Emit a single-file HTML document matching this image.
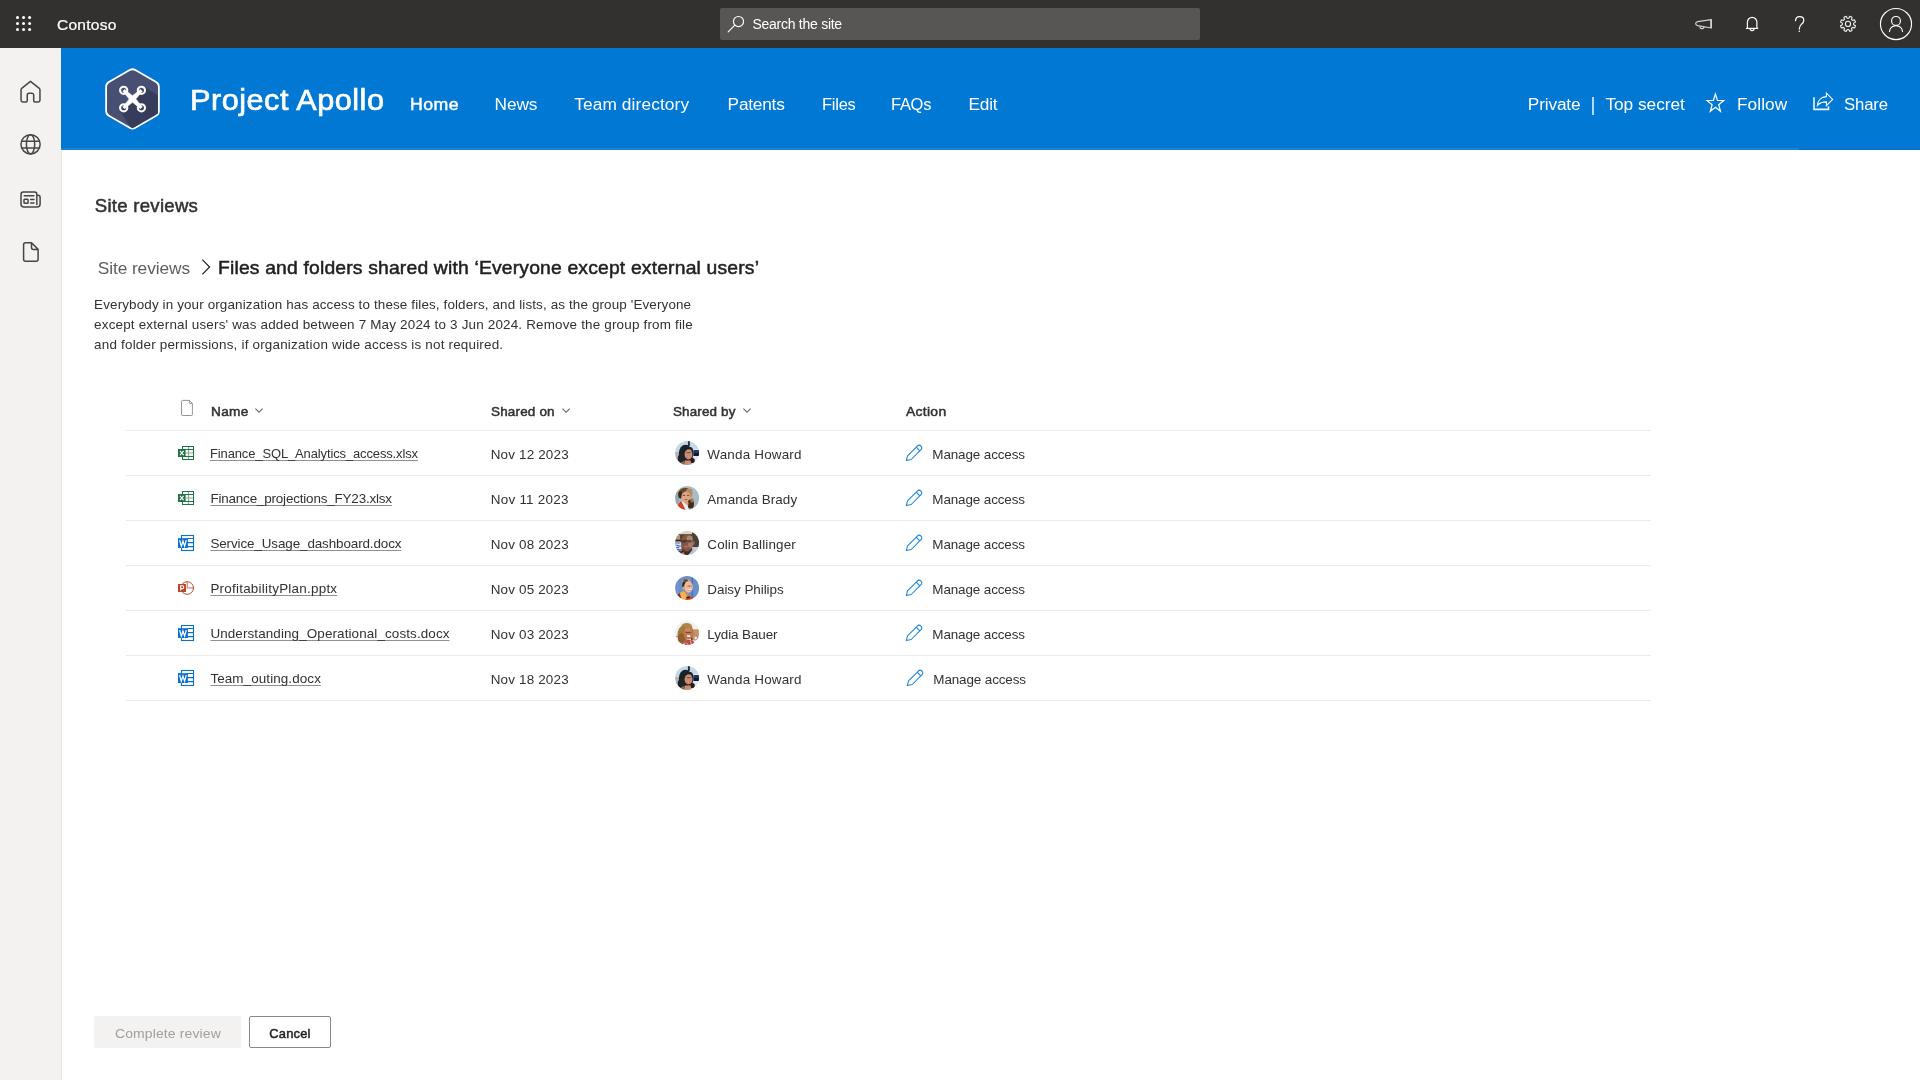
<!DOCTYPE html>
<html lang="en">
<head>
<meta charset="utf-8">
<title>Project Apollo - Site reviews</title>
<style>
html,body{margin:0;padding:0;}
body{width:1920px;height:1080px;overflow:hidden;background:#ffffff;position:relative;font-family:"Liberation Sans",sans-serif;}
.abs{position:absolute;}
.t{position:absolute;line-height:0;white-space:nowrap;font-family:"Liberation Sans",sans-serif;font-weight:normal;}
svg{position:absolute;overflow:visible;}
#topbar{left:0;top:0;width:1920px;height:48px;background:#323130;}
#searchbox{left:720px;top:8px;width:480px;height:32px;background:#585654;border-radius:2px;}
#leftnav{left:0;top:48px;width:61px;height:1032px;background:#f3f2f1;}
#navline{left:61px;top:150px;width:1px;height:930px;background:#e8e7e7;}
#sitehdr{left:61px;top:48px;width:1859px;height:102px;background:#0078d4;}
#hdrband{left:61px;top:148px;width:1738px;height:2px;background:#1682d8;}
#hdrband2{left:1799px;top:149px;width:121px;height:1px;background:#0070cf;}
.hl{position:absolute;left:126px;width:1525px;height:1px;background:#edebe9;}
#btn1{left:94px;top:1016px;width:147px;height:32px;background:#f3f2f1;border-radius:2px;}
#btn2{left:249px;top:1016px;width:82px;height:32px;background:#ffffff;border:1px solid #8a8886;border-radius:2px;box-sizing:border-box;}
</style>
</head>
<body>
<div id="topbar" class="abs"></div>
<div id="searchbox" class="abs"></div>
<div id="leftnav" class="abs"></div>
<div id="navline" class="abs"></div>
<div id="sitehdr" class="abs"></div>
<div id="hdrband" class="abs"></div>
<div id="hdrband2" class="abs"></div>

<!-- table lines -->
<div class="hl" style="top:430px"></div>
<div class="hl" style="top:475px"></div>
<div class="hl" style="top:520px"></div>
<div class="hl" style="top:565px"></div>
<div class="hl" style="top:610px"></div>
<div class="hl" style="top:655px"></div>
<div class="hl" style="top:700px"></div>

<div class="abs" style="left:1592px;top:97px;width:2px;height:17.6px;background:rgba(255,255,255,0.72)"></div>
<div id="btn1" class="abs"></div>
<div id="btn2" class="abs"></div>

<svg id="ico" width="1920" height="1080" viewBox="0 0 1920 1080" style="left:0;top:0">
<!-- waffle -->
<g fill="#ffffff">
<circle cx="17.5" cy="17.6" r="1.5"/><circle cx="23.55" cy="17.6" r="1.5"/><circle cx="29.6" cy="17.6" r="1.5"/>
<circle cx="17.5" cy="23.6" r="1.5"/><circle cx="23.55" cy="23.6" r="1.5"/><circle cx="29.6" cy="23.6" r="1.5"/>
<circle cx="17.5" cy="29.6" r="1.5"/><circle cx="23.55" cy="29.6" r="1.5"/><circle cx="29.6" cy="29.6" r="1.5"/>
</g>
<!-- search icon -->
<g fill="none" stroke="#ffffff" stroke-width="1.15" stroke-linecap="round">
<circle cx="738.5" cy="21.5" r="5.05"/><path d="M734.8 25.2 L728.2 31.8"/>
</g>
<!-- megaphone -->
<g fill="none" stroke="#d2d1d0" stroke-width="1.25" stroke-linejoin="round">
<path d="M1711.3 19.6 L1697.6 21.7 Q1695.7 22.1 1695.7 23.6 Q1695.7 25.2 1697.6 25.6 L1711.3 28 Z"/>
<path d="M1711.1 19.6 V28" stroke-width="1.7"/>
<path d="M1700.1 26.3 A2 2.1 0 0 0 1704.1 26.9"/>
</g>
<!-- bell -->
<g fill="none" stroke="#ffffff" stroke-width="1.2">
<path d="M1747.4 28.4 V22.2 A4.75 4.9 0 0 1 1756.9 22.2 V28.4"/>
<path d="M1745.9 28.4 H1758.2"/>
<path d="M1750.1 28.6 A2 2.1 0 0 0 1754.1 28.6"/>
</g>
<!-- help -->
<g fill="none" stroke="#ffffff" stroke-width="1.25" stroke-linecap="round">
<path d="M1795.5 20.6 C1795.7 18 1797.4 16.6 1799.6 16.6 C1802.2 16.6 1803.8 18.2 1803.8 20.4 C1803.8 22.4 1802.6 23.4 1801.2 24.6 C1799.9 25.8 1799.3 26.6 1799.3 29"/>
</g>
<circle cx="1799.3" cy="31.3" r="0.8" fill="#ffffff"/>
<!-- gear -->
<g fill="none" stroke="#f0f0f0" stroke-width="1.1" stroke-linejoin="round">
<path id="gearpath" d="M1848.76 18.25 L1849.81 16.36 L1852.05 17.29 L1851.46 19.37 L1852.53 20.44 L1854.61 19.85 L1855.54 22.09 L1853.65 23.14 L1853.65 24.66 L1855.54 25.71 L1854.61 27.95 L1852.53 27.36 L1851.46 28.43 L1852.05 30.51 L1849.81 31.44 L1848.76 29.55 L1847.24 29.55 L1846.19 31.44 L1843.95 30.51 L1844.54 28.43 L1843.47 27.36 L1841.39 27.95 L1840.46 25.71 L1842.35 24.66 L1842.35 23.14 L1840.46 22.09 L1841.39 19.85 L1843.47 20.44 L1844.54 19.37 L1843.95 17.29 L1846.19 16.36 L1847.24 18.25 Z"/>
<circle cx="1848" cy="23.9" r="2.6"/>
</g>
<!-- user -->
<g fill="none" stroke="#ffffff" stroke-width="1.15" stroke-linecap="round">
<circle cx="1896" cy="24" r="15.55"/>
<circle cx="1896" cy="20.9" r="4.45"/>
<path d="M1889.5 31.6 A6.5 6 0 0 1 1902.5 31.6"/>
</g>
<!-- left nav icons -->
<g fill="none" stroke="#484644" stroke-width="1.5" stroke-linejoin="round" stroke-linecap="round">
<path d="M30.45 81.3 L21.7 88.3 Q21.05 88.85 21.05 89.7 V100.3 Q21.05 102 22.8 102 H26 Q27.25 102 27.25 100.8 V94.9 Q27.25 93.15 29 93.15 H32 Q33.7 93.15 33.7 94.9 V100.8 Q33.7 102 35 102 H38.2 Q39.95 102 39.95 100.3 V89.7 Q39.95 88.85 39.3 88.3 Z"/>
<circle cx="30.55" cy="144.35" r="9.6"/>
<ellipse cx="30.55" cy="144.35" rx="4.15" ry="9.6"/>
<path d="M21.6 141.3 H39.5 M21.6 147.9 H39.5"/>
<!-- news -->
<path d="M36.85 204.6 V194.2 Q36.85 191.9 34.5 191.9 H23.3 Q21 191.9 21 194.2 V204 Q21 207 24 207 H37 Q40.1 207 40.1 204 V197.4 Q40.1 195.3 38 195.3 H36.9"/>
<path d="M24.2 195.8 H33.9 M30.6 199.4 H34 M30.6 202.9 H34"/>
<rect x="24" y="199.2" width="4.1" height="4" rx="0.8"/>
<!-- file -->
<path d="M31.5 242.8 H25.6 Q23.6 242.8 23.6 244.8 V259.2 Q23.6 261.2 25.6 261.2 H36.1 Q38.1 261.2 38.1 259.2 V249.4 L31.5 242.8 V247.4 Q31.5 249.4 33.5 249.4 H38.1"/>
</g>
<!-- star -->
<path d="M1715.40 94.04 L1717.43 100.50 L1723.67 100.61 L1718.68 104.72 L1720.51 111.24 L1715.40 107.32 L1710.29 111.24 L1712.12 104.72 L1707.13 100.61 L1713.37 100.50 Z" fill="none" stroke="#ffffff" stroke-width="1.25" stroke-linejoin="miter"/>
<!-- share -->
<g fill="none" stroke="#ffffff">
<path d="M1814 97.2 V109.4 H1828.5 V106.3" stroke-width="1.6" stroke-opacity="0.92"/>
<path d="M1826.4 93.2 L1832.6 99.4 L1826.4 105.6 V101.9 C1822.4 101.9 1819.5 103 1817.4 105.5 C1817.7 100.6 1821 96.9 1826.4 96.6 Z" stroke-width="1.15" stroke-linejoin="miter"/>
</g>
<!-- breadcrumb chevron -->
<path d="M202.3 259.6 L209.6 267 L202.3 274.4" fill="none" stroke="#201f1e" stroke-width="1.2"/>
<!-- header doc icon -->
<path d="M189.4 400.4 H182.5 Q181.5 400.4 181.5 401.4 V414.5 Q181.5 415.5 182.5 415.5 H191.4 Q192.4 415.5 192.4 414.5 V403.5 L189.4 400.4 V402.7 Q189.4 403.5 190.2 403.5 H192.4" fill="none" stroke="#8a8886" stroke-width="0.9" stroke-linejoin="round"/>
<!-- header chevrons -->
<g fill="none" stroke="#605e5c" stroke-width="1.05">
<path d="M255.4 408.7 L259 412.3 L262.6 408.7"/>
<path d="M562.5 408.7 L566.1 412.3 L569.7 408.7"/>
<path d="M743.4 408.7 L747 412.3 L750.6 408.7"/>
</g>

<!-- file icons -->
<g transform="translate(178,445)">
<rect x="4.5" y="1.5" width="11" height="13" fill="#ffffff" stroke="#217346" stroke-width="1"/>
<path d="M4.5 4.5 H15.5 M4.5 11.5 H15.5" stroke="#217346" stroke-width="1" fill="none"/>
<path d="M8 8 H15 M10.5 2 V14" stroke="#217346" stroke-opacity="0.55" stroke-width="1.2" fill="none"/>
<rect x="0" y="4" width="7.6" height="8" fill="#217346"/>
<path d="M2 5.8 L5.6 10.2 M5.6 5.8 L2 10.2" stroke="#ffffff" stroke-width="1.15" fill="none"/>
</g><g transform="translate(178,490)">
<rect x="4.5" y="1.5" width="11" height="13" fill="#ffffff" stroke="#217346" stroke-width="1"/>
<path d="M4.5 4.5 H15.5 M4.5 11.5 H15.5" stroke="#217346" stroke-width="1" fill="none"/>
<path d="M8 8 H15 M10.5 2 V14" stroke="#217346" stroke-opacity="0.55" stroke-width="1.2" fill="none"/>
<rect x="0" y="4" width="7.6" height="8" fill="#217346"/>
<path d="M2 5.8 L5.6 10.2 M5.6 5.8 L2 10.2" stroke="#ffffff" stroke-width="1.15" fill="none"/>
</g><g transform="translate(178,535)">
<rect x="3.5" y="0.5" width="12" height="15" fill="#ffffff" stroke="#0b6fce" stroke-width="1.1"/>
<path d="M9 3.5 H15.5 M9 7.6 H15.5 M9 11.6 H15.5" stroke="#0b6fce" stroke-width="1.1" fill="none"/>
<rect x="0" y="3.2" width="9.9" height="9.8" fill="#0b6fce"/>
<path d="M1.6 5.2 L3.3 11.2 L4.95 6 L6.6 11.2 L8.3 5.2" stroke="#ffffff" stroke-width="1.25" fill="none" stroke-linejoin="miter"/>
</g><g transform="translate(178,580)">
<circle cx="9.2" cy="8" r="6.3" fill="#ffffff" stroke="#b7472a" stroke-width="1"/>
<path d="M9.3 2 V7.8 H15.3" stroke="#b7472a" stroke-opacity="0.6" stroke-width="1.3" fill="none"/>
<rect x="0" y="4" width="8" height="8" fill="#b7472a"/>
<path d="M2.7 10.6 V5.7 H4.3 A1.45 1.45 0 0 1 4.3 8.6 H2.9" stroke="#ffffff" stroke-width="1.15" fill="none"/>
</g><g transform="translate(178,625)">
<rect x="3.5" y="0.5" width="12" height="15" fill="#ffffff" stroke="#0b6fce" stroke-width="1.1"/>
<path d="M9 3.5 H15.5 M9 7.6 H15.5 M9 11.6 H15.5" stroke="#0b6fce" stroke-width="1.1" fill="none"/>
<rect x="0" y="3.2" width="9.9" height="9.8" fill="#0b6fce"/>
<path d="M1.6 5.2 L3.3 11.2 L4.95 6 L6.6 11.2 L8.3 5.2" stroke="#ffffff" stroke-width="1.25" fill="none" stroke-linejoin="miter"/>
</g><g transform="translate(178,670)">
<rect x="3.5" y="0.5" width="12" height="15" fill="#ffffff" stroke="#0b6fce" stroke-width="1.1"/>
<path d="M9 3.5 H15.5 M9 7.6 H15.5 M9 11.6 H15.5" stroke="#0b6fce" stroke-width="1.1" fill="none"/>
<rect x="0" y="3.2" width="9.9" height="9.8" fill="#0b6fce"/>
<path d="M1.6 5.2 L3.3 11.2 L4.95 6 L6.6 11.2 L8.3 5.2" stroke="#ffffff" stroke-width="1.25" fill="none" stroke-linejoin="miter"/>
</g><g transform="translate(0,0)" fill="none" stroke="#1a84d8" stroke-width="1.05" stroke-linejoin="round">
<path d="M906.3 460.6 L907.5 455.9 L917.36 446.06 A2.6 2.6 0 0 1 921.04 449.74 L911.2 459.5 Z"/>
<path d="M916.2 447.2 L919.8 450.8"/>
</g><g transform="translate(0,45)" fill="none" stroke="#1a84d8" stroke-width="1.05" stroke-linejoin="round">
<path d="M906.3 460.6 L907.5 455.9 L917.36 446.06 A2.6 2.6 0 0 1 921.04 449.74 L911.2 459.5 Z"/>
<path d="M916.2 447.2 L919.8 450.8"/>
</g><g transform="translate(0,90)" fill="none" stroke="#1a84d8" stroke-width="1.05" stroke-linejoin="round">
<path d="M906.3 460.6 L907.5 455.9 L917.36 446.06 A2.6 2.6 0 0 1 921.04 449.74 L911.2 459.5 Z"/>
<path d="M916.2 447.2 L919.8 450.8"/>
</g><g transform="translate(0,135)" fill="none" stroke="#1a84d8" stroke-width="1.05" stroke-linejoin="round">
<path d="M906.3 460.6 L907.5 455.9 L917.36 446.06 A2.6 2.6 0 0 1 921.04 449.74 L911.2 459.5 Z"/>
<path d="M916.2 447.2 L919.8 450.8"/>
</g><g transform="translate(0,180)" fill="none" stroke="#1a84d8" stroke-width="1.05" stroke-linejoin="round">
<path d="M906.3 460.6 L907.5 455.9 L917.36 446.06 A2.6 2.6 0 0 1 921.04 449.74 L911.2 459.5 Z"/>
<path d="M916.2 447.2 L919.8 450.8"/>
</g><g transform="translate(1,225)" fill="none" stroke="#1a84d8" stroke-width="1.05" stroke-linejoin="round">
<path d="M906.3 460.6 L907.5 455.9 L917.36 446.06 A2.6 2.6 0 0 1 921.04 449.74 L911.2 459.5 Z"/>
<path d="M916.2 447.2 L919.8 450.8"/>
</g>
<!-- logo -->
<defs><clipPath id="hexinner"><path d="M132.50 69.59 L157.88 84.24 L157.88 113.56 L132.50 128.21 L107.12 113.56 L107.12 84.24 Z"/></clipPath><clipPath id="hexclip"><path d="M132.50 74.90 L153.28 86.90 L153.28 110.90 L132.50 122.90 L111.72 110.90 L111.72 86.90 Z" stroke="#000" stroke-width="9" stroke-linejoin="round"/></clipPath></defs>
<path d="M132.50 74.90 L153.28 86.90 L153.28 110.90 L132.50 122.90 L111.72 110.90 L111.72 86.90 Z" fill="#ffffff" stroke="#ffffff" stroke-width="13" stroke-linejoin="round"/>
<path d="M132.50 74.90 L153.28 86.90 L153.28 110.90 L132.50 122.90 L111.72 110.90 L111.72 86.90 Z" fill="#474f72" stroke="#474f72" stroke-width="9.4" stroke-linejoin="round"/>
<g clip-path="url(#hexinner)">
<path d="M145.2 87.3 L161 97.3 L161 135 L134 135 L129.5 126 L120.8 111.8 L132.5 99 Z" fill="#363c59"/>
</g>
<g fill="none" stroke="#ffffff">
<circle cx="123.7" cy="90.3" r="3.6" stroke-width="2.1"/>
<circle cx="141.4" cy="90.3" r="3.6" stroke-width="2.1"/>
<circle cx="123.7" cy="107.8" r="3.6" stroke-width="2.1"/>
<circle cx="141.4" cy="107.8" r="3.6" stroke-width="2.1"/>
</g><path d="M132.50 95.70 L140.52 89.42 L142.28 91.18 L135.80 99.00 L142.28 106.92 L140.52 108.68 L132.50 102.30 L124.58 108.68 L122.82 106.92 L129.20 99.00 L122.82 91.18 L124.58 89.42 Z" fill="#ffffff" stroke="#ffffff" stroke-width="0.6" stroke-linejoin="round"/>

<!-- avatars -->
<defs><clipPath id="avc"><circle cx="12" cy="12" r="12"/></clipPath><filter id="avblur" x="-10%" y="-10%" width="120%" height="120%"><feGaussianBlur stdDeviation="0.6"/></filter></defs>
<g transform="translate(675.1,441)" clip-path="url(#avc)"><g filter="url(#avblur)"><rect width="24" height="24" fill="#c3d9e7"/>
<rect x="14" y="8" width="10" height="16" fill="#e3e9ee"/>
<rect x="0" y="11" width="6" height="8" fill="#b4b4ba"/>
<rect x="18.4" y="9" width="6" height="3" fill="#22356b"/><rect x="18.4" y="12" width="6" height="3" fill="#0f1338"/>
<rect x="12.8" y="0" width="2" height="5" fill="#2a2f35"/>
<ellipse cx="10.4" cy="12.2" rx="6.6" ry="8.4" fill="#1c2026"/>
<ellipse cx="15.5" cy="12" rx="3" ry="6" fill="#1c2026"/>
<ellipse cx="7.6" cy="17.4" rx="5" ry="5.6" fill="#20242b"/>
<ellipse cx="16.5" cy="19.5" rx="3.2" ry="2.8" fill="#2a1a1c"/>
<ellipse cx="13.4" cy="13.4" rx="3.9" ry="5" fill="#c98e72"/>
<ellipse cx="13.6" cy="11.6" rx="2.8" ry="0.7" fill="#7a5548"/>
<ellipse cx="14" cy="9.8" rx="2.4" ry="1.2" fill="#c98f76"/>
<path d="M9 24 L10 19.5 L15.5 19.5 L16.5 24 Z" fill="#c98d6f"/>
<path d="M5 22 L9.5 19.5 L9.5 24 L5 24 Z" fill="#8a6a5a"/>
<ellipse cx="13.6" cy="16.6" rx="1.5" ry="0.6" fill="#b23a48"/>
<ellipse cx="13.6" cy="16.3" rx="1.1" ry="0.35" fill="#f3e6e2"/></g></g>
<g transform="translate(675.1,486)" clip-path="url(#avc)"><g filter="url(#avblur)"><rect width="24" height="24" fill="#a9bcc3"/>
<rect x="0" y="6" width="4" height="12" fill="#93a9ad"/>
<ellipse cx="10" cy="7.6" rx="6.8" ry="5.8" fill="#6b4429"/>
<ellipse cx="14" cy="7" rx="3.4" ry="4.4" fill="#b98a5c"/>
<ellipse cx="5.2" cy="9" rx="2" ry="3.4" fill="#3b2516"/>
<ellipse cx="10.7" cy="11.2" rx="4.5" ry="5.6" fill="#dca685"/>
<ellipse cx="15.6" cy="18" rx="3.3" ry="4.6" fill="#4a2a19"/>
<ellipse cx="16.8" cy="14.4" rx="1.6" ry="2.2" fill="#a86f43"/>
<path d="M2 20 L6 14.8 L10.5 24 L3 24 Z" fill="#d73c23"/>
<path d="M6.2 14.8 L12.5 19 L13.5 24 L10.5 24 Z" fill="#efeeee"/>
<path d="M9 16.5 L13.5 16 L13 20 Z" fill="#d79f80"/>
<ellipse cx="11" cy="13.6" rx="1.5" ry="0.55" fill="#b84a58"/>
<path d="M7.6 9.4 H10 M11.8 9.4 H14" stroke="#4a3024" stroke-width="0.8"/></g></g>
<g transform="translate(675.1,531)" clip-path="url(#avc)"><g filter="url(#avblur)"><rect width="24" height="24" fill="#4a4038"/>
<rect x="4" y="0" width="13" height="3.2" fill="#d9d3bd"/>
<rect x="17" y="16" width="7" height="8" fill="#c9ccd6"/>
<rect x="0" y="4" width="5" height="8" fill="#b98f7c"/>
<rect x="0" y="8.6" width="5" height="1.6" fill="#3a2c22"/>
<rect x="0" y="11" width="6.4" height="8.6" fill="#dfe6f3"/>
<path d="M0 12 H5 M0.5 14 L5.5 15.4 M0 16.6 H4 M1 18.6 H6" stroke="#3f6ec5" stroke-width="1.1"/>
<ellipse cx="12" cy="11.6" rx="6.3" ry="8.4" fill="#865745"/>
<ellipse cx="14.6" cy="7.4" rx="3" ry="3" fill="#b08573"/>
<ellipse cx="15.4" cy="13.6" rx="2.4" ry="3.2" fill="#a77a68"/>
<ellipse cx="18.6" cy="12" rx="1" ry="2" fill="#9a6c59"/>
<rect x="6" y="9" width="10.4" height="1.2" rx="0.5" fill="#4a3a2e"/>
<ellipse cx="8.8" cy="10.2" rx="2.3" ry="1.5" fill="#4d3a30"/>
<ellipse cx="14" cy="10.2" rx="2.2" ry="1.5" fill="#6a4e42"/>
<ellipse cx="11" cy="15.6" rx="2" ry="0.9" fill="#c56d6e"/>
<path d="M7 19.5 Q12 24 17 18 L20 24 L6 24 Z" fill="#3a2620"/>
<path d="M13 24 L17.5 18.5 L21 20 L20 24 Z" fill="#b6c0d6"/>
<path d="M5.5 22.5 L8.5 21 L10 24 L6.5 24 Z" fill="#e06a5c"/></g></g>
<g transform="translate(675.1,576)" clip-path="url(#avc)"><g filter="url(#avblur)"><rect width="24" height="24" fill="#6b90c9"/>
<rect x="16.6" y="0" width="1.1" height="24" fill="#456bb0"/>
<rect x="2" y="0" width="1" height="24" fill="#7b9cd0"/>
<ellipse cx="11.4" cy="7.4" rx="4.8" ry="4.6" fill="#bfa17c"/>
<ellipse cx="9" cy="9" rx="2" ry="3.6" fill="#3b2a20"/>
<ellipse cx="10.6" cy="4.6" rx="2.4" ry="1.3" fill="#5a4633"/>
<ellipse cx="13.4" cy="11" rx="4.4" ry="5.8" fill="#ecbc9f"/>
<ellipse cx="14.4" cy="10" rx="2.6" ry="0.6" fill="#8a6350"/>
<ellipse cx="8.2" cy="12" rx="1" ry="1.6" fill="#e0ab8e"/>
<path d="M9.2 14 L13 17 L14 20.5 L9.8 18 Z" fill="#c98a6c"/>
<path d="M4.6 17 L8.6 15 L12.6 21 L10 24 L6 23 Z" fill="#f6b546"/>
<path d="M2.2 19 L4.6 17 L6.4 23 L4 21.6 Z" fill="#8a2a4a"/>
<path d="M10 24 L12.6 20.6 L14.4 19.4 L17.6 21.6 L16 24 Z" fill="#e2440e"/>
<rect x="11.2" y="20.8" width="3.6" height="1.4" rx="0.5" fill="#2a211d"/>
<ellipse cx="14.8" cy="13.8" rx="1.5" ry="0.7" fill="#f6ebe6"/>
<ellipse cx="14.9" cy="14.6" rx="1.3" ry="0.45" fill="#c76a64"/></g></g>
<g transform="translate(675.1,621)" clip-path="url(#avc)"><g filter="url(#avblur)"><rect width="24" height="24" fill="#eef2f3"/>
<rect x="17" y="8.4" width="7" height="11" fill="#c48f6f"/>
<rect x="21.6" y="8" width="2.4" height="5" fill="#d79560"/>
<ellipse cx="20.6" cy="17" rx="1.2" ry="1.6" fill="#e8efe6"/>
<path d="M0 14.4 L3.6 15.4 L3.6 16.4 L0 15.6 Z" fill="#d57a86"/>
<ellipse cx="11.6" cy="6.6" rx="5.6" ry="4.6" fill="#b5844a"/>
<ellipse cx="7.6" cy="14" rx="5.2" ry="9" fill="#a9783f"/>
<ellipse cx="6.4" cy="17.6" rx="3.6" ry="5.4" fill="#8e6030"/>
<ellipse cx="16.6" cy="12" rx="1.6" ry="5" fill="#a9783f"/>
<ellipse cx="13.2" cy="12.8" rx="4.5" ry="6" fill="#c07a55"/>
<ellipse cx="13.4" cy="11.4" rx="3.2" ry="0.7" fill="#7a4a35"/>
<ellipse cx="13" cy="8.8" rx="3.2" ry="1.8" fill="#c98a62"/>
<ellipse cx="13.6" cy="15" rx="1.9" ry="0.9" fill="#f5ede8"/>
<path d="M9.4 24 L10.4 19.4 L17.6 19.6 L19.6 22 L16 24 Z" fill="#c9414a"/>
<path d="M11.4 19 L15.6 19 L14.4 21.4 L12 21.4 Z" fill="#9a5a40"/>
<path d="M11 21.4 L13 24 M15.4 20 L16.4 24" stroke="#e8dfe2" stroke-width="0.7"/>
<ellipse cx="16.6" cy="18" rx="0.9" ry="1.6" fill="#6b3a22"/></g></g>
<g transform="translate(675.1,666)" clip-path="url(#avc)"><g filter="url(#avblur)"><rect width="24" height="24" fill="#c3d9e7"/>
<rect x="14" y="8" width="10" height="16" fill="#e3e9ee"/>
<rect x="0" y="11" width="6" height="8" fill="#b4b4ba"/>
<rect x="18.4" y="9" width="6" height="3" fill="#22356b"/><rect x="18.4" y="12" width="6" height="3" fill="#0f1338"/>
<rect x="12.8" y="0" width="2" height="5" fill="#2a2f35"/>
<ellipse cx="10.4" cy="12.2" rx="6.6" ry="8.4" fill="#1c2026"/>
<ellipse cx="15.5" cy="12" rx="3" ry="6" fill="#1c2026"/>
<ellipse cx="7.6" cy="17.4" rx="5" ry="5.6" fill="#20242b"/>
<ellipse cx="16.5" cy="19.5" rx="3.2" ry="2.8" fill="#2a1a1c"/>
<ellipse cx="13.4" cy="13.4" rx="3.9" ry="5" fill="#c98e72"/>
<ellipse cx="13.6" cy="11.6" rx="2.8" ry="0.7" fill="#7a5548"/>
<ellipse cx="14" cy="9.8" rx="2.4" ry="1.2" fill="#c98f76"/>
<path d="M9 24 L10 19.5 L15.5 19.5 L16.5 24 Z" fill="#c98d6f"/>
<path d="M5 22 L9.5 19.5 L9.5 24 L5 24 Z" fill="#8a6a5a"/>
<ellipse cx="13.6" cy="16.6" rx="1.5" ry="0.6" fill="#b23a48"/>
<ellipse cx="13.6" cy="16.3" rx="1.1" ry="0.35" fill="#f3e6e2"/></g></g>
</svg>

<div id="txt" style="position:absolute;left:0;top:0;width:1920px;height:1080px;will-change:transform;">
<div id="contoso" class="t" style="left:56.50px;top:25.01px;font-size:14.8px;color:#ffffff;letter-spacing:0.224px;-webkit-text-stroke:0.22px #ffffff;transform:scaleX(1.0516);transform-origin:0 0;">Contoso</div>
<div id="search" class="t" style="left:752.50px;top:24.01px;font-size:14.0px;color:#ffffff;letter-spacing:-0.268px;">Search the site</div>
<div id="title" class="t" style="left:189.60px;top:100.01px;font-size:28.6px;color:#ffffff;letter-spacing:0.468px;-webkit-text-stroke:0.66px #ffffff;transform:scaleX(1.0720);transform-origin:0 0;">Project Apollo</div>
<div id="n_home" class="t" style="left:409.60px;top:105.01px;font-size:16.7px;color:#ffffff;letter-spacing:0.394px;-webkit-text-stroke:0.45px #ffffff;transform:scaleX(1.0611);transform-origin:0 0;">Home</div>
<div id="n_news" class="t" style="left:494.60px;top:104.01px;font-size:17.3px;color:#ffffff;letter-spacing:-0.148px;">News</div>
<div id="n_team" class="t" style="left:574.20px;top:104.01px;font-size:17.3px;color:#ffffff;letter-spacing:0.124px;">Team directory</div>
<div id="n_pat" class="t" style="left:727.60px;top:104.01px;font-size:17.3px;color:#ffffff;letter-spacing:-0.232px;">Patents</div>
<div id="n_files" class="t" style="left:821.60px;top:104.01px;font-size:17.3px;color:#ffffff;letter-spacing:-0.229px;transform:scaleX(0.9501);transform-origin:0 0;">Files</div>
<div id="n_faq" class="t" style="left:891.00px;top:104.01px;font-size:17.3px;color:#ffffff;letter-spacing:-0.305px;transform:scaleX(0.9561);transform-origin:0 0;">FAQs</div>
<div id="n_edit" class="t" style="left:968.40px;top:104.01px;font-size:17.3px;color:#ffffff;letter-spacing:-0.195px;">Edit</div>
<div id="h_priv" class="t" style="left:1527.80px;top:104.01px;font-size:17.3px;color:#ffffff;letter-spacing:-0.169px;">Private</div>
<div id="h_top" class="t" style="left:1605.40px;top:104.01px;font-size:17.3px;color:#ffffff;letter-spacing:-0.025px;">Top secret</div>
<div id="h_follow" class="t" style="left:1737.00px;top:104.01px;font-size:17.3px;color:#ffffff;letter-spacing:0.048px;">Follow</div>
<div id="h_share" class="t" style="left:1844.40px;top:104.01px;font-size:17.3px;color:#ffffff;letter-spacing:-0.179px;transform:scaleX(0.9686);transform-origin:0 0;">Share</div>
<div id="h1" class="t" style="left:94.80px;top:206.00px;font-size:18.6px;color:#323130;letter-spacing:0.258px;-webkit-text-stroke:0.51px #323130;">Site reviews</div>
<div id="bc1" class="t" style="left:97.80px;top:268.00px;font-size:17.3px;color:#605e5c;letter-spacing:-0.085px;">Site reviews</div>
<div id="bc2" class="t" style="left:218.40px;top:268.01px;font-size:18.6px;color:#201f1e;letter-spacing:0.167px;-webkit-text-stroke:0.51px #201f1e;transform:scaleX(1.0388);transform-origin:0 0;">Files and folders shared with ‘Everyone except external users’</div>
<div id="p1" class="t" style="left:94.10px;top:305.01px;font-size:13.45px;color:#323130;letter-spacing:0.127px;">Everybody in your organization has access to these files, folders, and lists, as the group &#x27;Everyone</div>
<div id="p2" class="t" style="left:94.10px;top:325.01px;font-size:13.45px;color:#323130;letter-spacing:0.178px;">except external users&#x27; was added between 7 May 2024 to 3 Jun 2024. Remove the group from file</div>
<div id="p3" class="t" style="left:94.10px;top:345.01px;font-size:13.45px;color:#323130;letter-spacing:0.196px;">and folder permissions, if organization wide access is not required.</div>
<div id="th_name" class="t" style="left:211.30px;top:412.00px;font-size:12.9px;color:#323130;letter-spacing:0.285px;-webkit-text-stroke:0.48px #323130;transform:scaleX(1.0569);transform-origin:0 0;">Name</div>
<div id="th_on" class="t" style="left:491.30px;top:412.00px;font-size:12.9px;color:#323130;letter-spacing:0.165px;-webkit-text-stroke:0.48px #323130;transform:scaleX(1.0459);transform-origin:0 0;">Shared on</div>
<div id="th_by" class="t" style="left:673.30px;top:412.00px;font-size:12.9px;color:#323130;letter-spacing:0.148px;-webkit-text-stroke:0.48px #323130;transform:scaleX(1.0413);transform-origin:0 0;">Shared by</div>
<div id="th_act" class="t" style="left:906.30px;top:412.00px;font-size:12.9px;color:#323130;letter-spacing:0.263px;-webkit-text-stroke:0.48px #323130;transform:scaleX(1.0811);transform-origin:0 0;">Action</div>
<div id="f0" class="t" style="left:210.40px;top:454.01px;font-size:13.45px;color:#323130;letter-spacing:-0.129px;text-decoration:underline;text-decoration-color:#93918f;text-underline-offset:1.5px;text-decoration-thickness:1.3px;text-decoration-skip-ink:none;transform:scaleX(0.9657);transform-origin:0 0;">Finance_SQL_Analytics_access.xlsx</div>
<div id="d0" class="t" style="left:490.70px;top:455.01px;font-size:13.45px;color:#323130;letter-spacing:0.171px;">Nov 12 2023</div>
<div id="u0" class="t" style="left:707.30px;top:455.01px;font-size:13.45px;color:#323130;letter-spacing:0.189px;">Wanda Howard</div>
<div id="m0" class="t" style="left:932.30px;top:455.01px;font-size:13.45px;color:#323130;letter-spacing:-0.114px;">Manage access</div>
<div id="f1" class="t" style="left:210.40px;top:499.01px;font-size:13.45px;color:#323130;letter-spacing:-0.180px;text-decoration:underline;text-decoration-color:#93918f;text-underline-offset:1.5px;text-decoration-thickness:1.3px;text-decoration-skip-ink:none;">Finance_projections_FY23.xlsx</div>
<div id="d1" class="t" style="left:490.70px;top:500.01px;font-size:13.45px;color:#323130;letter-spacing:0.265px;">Nov 11 2023</div>
<div id="u1" class="t" style="left:707.30px;top:500.01px;font-size:13.45px;color:#323130;letter-spacing:0.088px;">Amanda Brady</div>
<div id="m1" class="t" style="left:932.30px;top:500.01px;font-size:13.45px;color:#323130;letter-spacing:-0.114px;">Manage access</div>
<div id="f2" class="t" style="left:210.40px;top:544.01px;font-size:13.45px;color:#323130;letter-spacing:-0.114px;text-decoration:underline;text-decoration-color:#93918f;text-underline-offset:1.5px;text-decoration-thickness:1.3px;text-decoration-skip-ink:none;">Service_Usage_dashboard.docx</div>
<div id="d2" class="t" style="left:490.70px;top:545.01px;font-size:13.45px;color:#323130;letter-spacing:0.171px;">Nov 08 2023</div>
<div id="u2" class="t" style="left:707.30px;top:545.01px;font-size:13.45px;color:#323130;letter-spacing:0.127px;">Colin Ballinger</div>
<div id="m2" class="t" style="left:932.30px;top:545.01px;font-size:13.45px;color:#323130;letter-spacing:-0.114px;">Manage access</div>
<div id="f3" class="t" style="left:210.40px;top:589.01px;font-size:13.45px;color:#323130;letter-spacing:0.235px;text-decoration:underline;text-decoration-color:#93918f;text-underline-offset:1.5px;text-decoration-thickness:1.3px;text-decoration-skip-ink:none;">ProfitabilityPlan.pptx</div>
<div id="d3" class="t" style="left:490.70px;top:590.01px;font-size:13.45px;color:#323130;letter-spacing:0.171px;">Nov 05 2023</div>
<div id="u3" class="t" style="left:707.30px;top:590.01px;font-size:13.45px;color:#323130;letter-spacing:-0.042px;">Daisy Philips</div>
<div id="m3" class="t" style="left:932.30px;top:590.01px;font-size:13.45px;color:#323130;letter-spacing:-0.114px;">Manage access</div>
<div id="f4" class="t" style="left:210.40px;top:634.01px;font-size:13.45px;color:#323130;letter-spacing:0.107px;text-decoration:underline;text-decoration-color:#93918f;text-underline-offset:1.5px;text-decoration-thickness:1.3px;text-decoration-skip-ink:none;">Understanding_Operational_costs.docx</div>
<div id="d4" class="t" style="left:490.70px;top:635.01px;font-size:13.45px;color:#323130;letter-spacing:0.171px;">Nov 03 2023</div>
<div id="u4" class="t" style="left:707.30px;top:635.01px;font-size:13.45px;color:#323130;letter-spacing:-0.097px;">Lydia Bauer</div>
<div id="m4" class="t" style="left:932.30px;top:635.01px;font-size:13.45px;color:#323130;letter-spacing:-0.114px;">Manage access</div>
<div id="f5" class="t" style="left:210.40px;top:679.01px;font-size:13.45px;color:#323130;letter-spacing:0.093px;text-decoration:underline;text-decoration-color:#93918f;text-underline-offset:1.5px;text-decoration-thickness:1.3px;text-decoration-skip-ink:none;">Team_outing.docx</div>
<div id="d5" class="t" style="left:490.70px;top:680.01px;font-size:13.45px;color:#323130;letter-spacing:0.171px;">Nov 18 2023</div>
<div id="u5" class="t" style="left:707.30px;top:680.01px;font-size:13.45px;color:#323130;letter-spacing:0.189px;">Wanda Howard</div>
<div id="m5" class="t" style="left:933.30px;top:680.01px;font-size:13.45px;color:#323130;letter-spacing:-0.114px;">Manage access</div>
<div id="b_comp" class="t" style="left:114.50px;top:1034.01px;font-size:13.45px;color:#a19f9d;letter-spacing:0.133px;transform:scaleX(1.0372);transform-origin:0 0;">Complete review</div>
<div id="b_canc" class="t" style="left:269.30px;top:1034.00px;font-size:12.9px;color:#201f1e;letter-spacing:0.211px;-webkit-text-stroke:0.48px #201f1e;">Cancel</div>
</div>
</body>
</html>
